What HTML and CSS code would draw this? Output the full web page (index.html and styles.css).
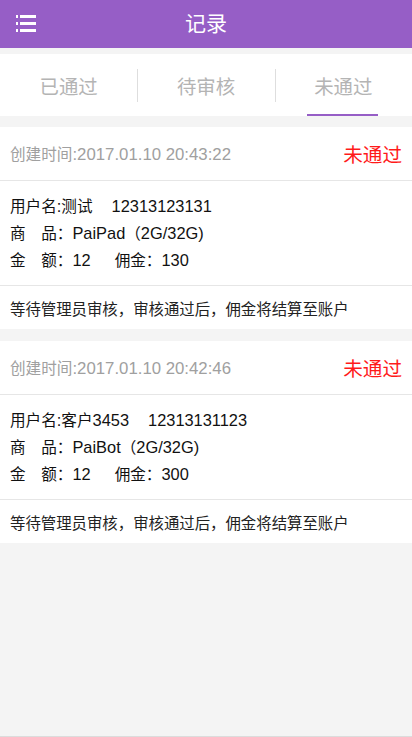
FILE: index.html
```html
<!DOCTYPE html>
<html lang="zh-CN">
<head>
<meta charset="utf-8">
<title>记录</title>
<link rel="stylesheet" href="styles.css">
</head>
<body>
<div class="page">
  <header class="topbar">
    <span class="menu-btn">
      <svg width="20" height="19" viewBox="0 0 20 19">
        <rect x="0" y="1" width="2" height="3" fill="#fff"/>
        <rect x="4" y="1" width="16" height="3" fill="#fff"/>
        <rect x="0" y="8" width="2" height="3" fill="#fff"/>
        <rect x="4" y="8" width="16" height="3" fill="#fff"/>
        <rect x="0" y="15" width="2" height="3" fill="#fff"/>
        <rect x="4" y="15" width="16" height="3" fill="#fff"/>
      </svg>
    </span>
    <h1 class="title">记录</h1>
  </header>

  <nav class="tabs">
    <div class="tab">已通过</div>
    <div class="tab">待审核</div>
    <div class="tab active">未通过</div>
  </nav>

  <main class="list">
    <section class="card">
      <div class="card-head">
        <span class="time">创建时间<span class="en">:2017.01.10 20:43:22</span></span>
        <span class="status">未通过</span>
      </div>
      <div class="card-body">
        <p>用户名<span class="en">:</span>测试<span class="en gap">12313123131</span></p>
        <p>商　品：<span class="en">PaiPad</span>（<span class="en">2G/32G)</span></p>
        <p>金　额：<span class="en">12</span><span class="gap2">佣金：<span class="en">130</span></span></p>
      </div>
      <div class="card-foot">等待管理员审核，审核通过后，佣金将结算至账户</div>
    </section>

    <section class="card">
      <div class="card-head">
        <span class="time">创建时间<span class="en">:2017.01.10 20:42:46</span></span>
        <span class="status">未通过</span>
      </div>
      <div class="card-body">
        <p>用户名<span class="en">:</span>客户<span class="en">3453</span><span class="en gap">12313131123</span></p>
        <p>商　品：<span class="en">PaiBot</span>（<span class="en">2G/32G)</span></p>
        <p>金　额：<span class="en">12</span><span class="gap2">佣金：<span class="en">300</span></span></p>
      </div>
      <div class="card-foot">等待管理员审核，审核通过后，佣金将结算至账户</div>
    </section>
  </main>
</div>
</body>
</html>
```

FILE: styles.css
```css
* { box-sizing: border-box; }
html, body {
  margin: 0;
  padding: 0;
  background: #f4f4f4;
  font-family: "Liberation Sans", "Noto Sans CJK SC", sans-serif;
}
.page {
  min-height: 737px;
  border-bottom: 1px solid #dcdcdc;
}
.topbar {
  height: 48px;
  background: #965ec6;
  display: flex;
  align-items: center;
  justify-content: center;
  position: relative;
}
.menu-btn {
  position: absolute;
  left: 16px;
  top: 14px;
  width: 20px;
  height: 19px;
  display: block;
}
.menu-btn svg { display: block; }
.title {
  margin: 0;
  color: #fff;
  font-size: 21px;
  font-weight: normal;
  line-height: 48px;
}
.tabs {
  margin-top: 6px;
  height: 62px;
  background: #fff;
  display: grid;
  grid-template-columns: 1fr 1fr 1fr;
  align-items: center;
}
.tab {
  position: relative;
  height: 62px;
  display: flex;
  align-items: center;
  justify-content: center;
  font-size: 19.4px;
  color: #b4b4b4;
}
.tab + .tab::before {
  content: "";
  position: absolute;
  left: 0;
  top: 15px;
  height: 33px;
  width: 1px;
  background: #dedede;
}
.tab.active::after {
  content: "";
  position: absolute;
  bottom: 0;
  left: 50%;
  width: 71px;
  margin-left: -36px;
  height: 2px;
  background: #965ec6;
}
.list {
  padding-top: 11px;
  display: flex;
  flex-direction: column;
  gap: 12px;
}
.card {
  background: #fff;
}
.card-head {
  height: 54px;
  padding: 0 10px;
  display: flex;
  align-items: center;
  justify-content: space-between;
  border-bottom: 1px solid #e6e6e6;
}
.time {
  color: #a0a0a0;
  font-size: 15.6px;
}
.en {
  font-size: 16.4px;
}
.time .en {
  font-size: 16.8px;
}
.status {
  color: #ff1a1a;
  font-size: 19.6px;
}
.card-body {
  padding: 12px 10px 11px;
  border-bottom: 1px solid #e6e6e6;
}
.card-body p {
  margin: 0;
  font-size: 15.6px;
  line-height: 27px;
  color: #111;
}
.gap { margin-left: 19px; }
.gap2 { margin-left: 24px; }
.card-foot {
  height: 43px;
  padding: 0 10px;
  display: flex;
  align-items: center;
  font-size: 15.4px;
  color: #222;
}
```
